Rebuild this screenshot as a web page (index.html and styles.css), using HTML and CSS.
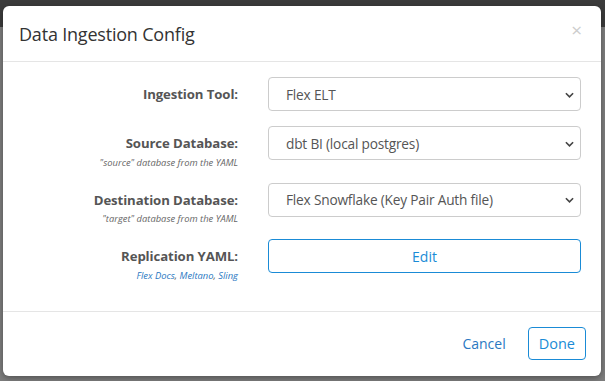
FILE: index.html
```html
<!DOCTYPE html>
<html>
<head>
<meta charset="utf-8">
<link rel="stylesheet" href="styles.css">
</head>
<body>
<div class="backdrop">
  <div class="modal">
    <div class="modal-header">
      <h4 class="modal-title">Data Ingestion Config</h4>
      <span class="close">&times;</span>
    </div>
    <div class="modal-body">
      <div class="row">
        <div class="label-col"><div class="label">Ingestion Tool:</div></div>
        <div class="control"><div class="select"><span>Flex ELT</span><svg class="chev" viewBox="0 0 10 6" width="9" height="6"><path d="M1 1l4 4 4-4" fill="none" stroke="#444" stroke-width="1.8"/></svg></div></div>
      </div>
      <div class="row">
        <div class="label-col"><div class="label">Source Database:</div><div class="help">"source" database from the YAML</div></div>
        <div class="control"><div class="select"><span>dbt BI (local postgres)</span><svg class="chev" viewBox="0 0 10 6" width="9" height="6"><path d="M1 1l4 4 4-4" fill="none" stroke="#444" stroke-width="1.8"/></svg></div></div>
      </div>
      <div class="row">
        <div class="label-col"><div class="label">Destination Database:</div><div class="help">"target" database from the YAML</div></div>
        <div class="control"><div class="select"><span>Flex Snowflake (Key Pair Auth file)</span><svg class="chev" viewBox="0 0 10 6" width="9" height="6"><path d="M1 1l4 4 4-4" fill="none" stroke="#444" stroke-width="1.8"/></svg></div></div>
      </div>
      <div class="row">
        <div class="label-col"><div class="label">Replication YAML:</div><div class="help links"><a>Flex Docs</a>, <a>Meltano</a>, <a>Sling</a></div></div>
        <div class="control"><div class="btn-edit">Edit</div></div>
      </div>
    </div>
    <div class="modal-footer">
      <span class="btn-cancel">Cancel</span>
      <span class="btn-done">Done</span>
    </div>
  </div>
</div>
</body>
</html>
```
FILE: styles.css
```css
html, body { margin: 0; padding: 0; }
body {
  width: 605px; height: 381px; overflow: hidden;
  font-family: "Open Sans", "Noto Sans", sans-serif;
  background: linear-gradient(#3b3b3b 0, #3b3b3b 27px, #7d7d7d 27px, #7d7d7d 100%);
}
.backdrop { padding: 6px 4px 0 3px; }
.modal {
  background: #fff; border-radius: 6px; height: 370px;
  display: flex; flex-direction: column;
  box-shadow: 0 2px 6px rgba(0,0,0,0.35);
}
.modal-header {
  height: 56px; box-sizing: border-box; border-bottom: 1px solid #e5e5e5;
  display: flex; align-items: center; justify-content: space-between;
  padding: 0 19px 0 16px;
}
.modal-title { margin: 0; font-size: 18px; font-weight: 400; color: #333; letter-spacing: -0.2px; }
.close { font-size: 19px; color: #cdcdcd; font-weight: 400; line-height: 1; margin-top: -7px; }
.modal-body {
  flex: 1; padding: 15px 20px 0 15px;
  display: flex; flex-direction: column; gap: 13px;
}
.row { display: flex; min-height: 36px; align-items: flex-start; }
.label-col { width: 220px; text-align: right; padding-right: 30px; }
.label { font-size: 13.2px; font-weight: 700; color: #555; line-height: 20px; padding-top: 7px; letter-spacing: -0.1px; }
.help { font-size: 9.4px; font-style: italic; color: #666; line-height: 14px; margin-top: 2.5px; }
.links a { color: #2a78c2; }
.control { flex: 1; }
.select {
  height: 34px; box-sizing: border-box; border: 1px solid #ccc; border-radius: 4px;
  display: flex; align-items: center; justify-content: space-between;
  padding: 0 6px 0 17px; font-size: 13.7px; color: #555; letter-spacing: -0.2px;
}
.chev { margin-top: 1px; }
.btn-edit {
  height: 34px; box-sizing: border-box; border: 1px solid #1a8bd6; border-radius: 4px;
  display: flex; align-items: center; justify-content: center;
  font-size: 14px; color: #1a8bd6;
}
.modal-footer {
  height: 65px; box-sizing: border-box; border-top: 1px solid #e5e5e5;
  display: flex; justify-content: flex-end; align-items: flex-start;
  padding: 15px 15px 0 0; gap: 10px;
}
.btn-cancel {
  height: 33px; display: flex; align-items: center; padding: 0 12px;
  font-size: 14px; color: #2a78c2;
}
.btn-done {
  height: 33px; box-sizing: border-box; border: 1px solid #1a8bd6; border-radius: 4px;
  display: flex; align-items: center; padding: 0 10px;
  font-size: 14.5px; color: #1a8bd6;
}
```
